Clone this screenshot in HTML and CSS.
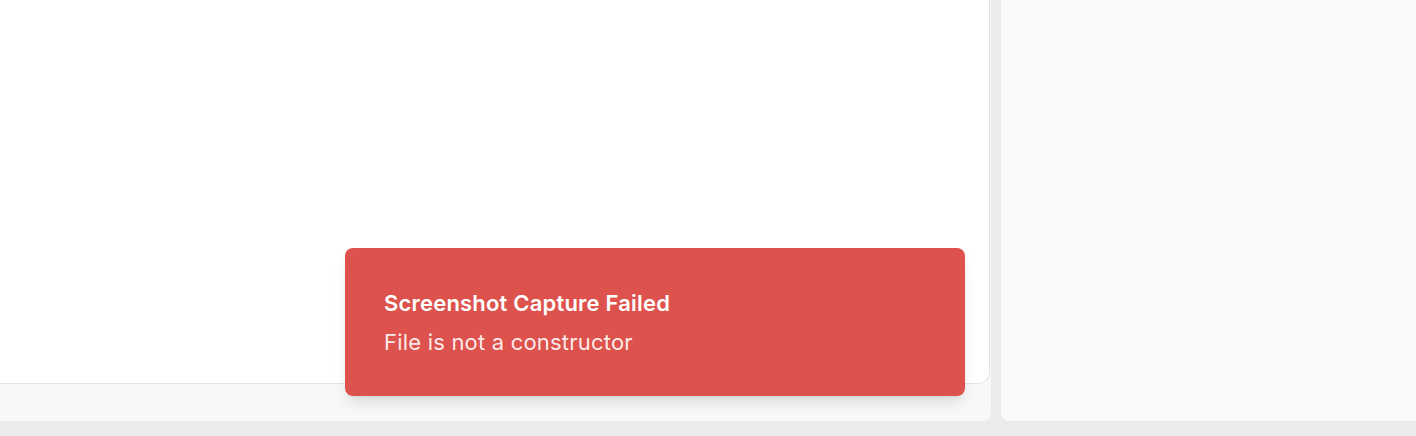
FILE: index.html
```html
<!DOCTYPE html>
<html>
<head>
<meta charset="utf-8">
<link rel="stylesheet" href="styles.css">
</head>
<body>
<div class="app">
  <div class="main">
    <div class="canvas"></div>
    <div class="footer"></div>
  </div>
  <div class="side"></div>
</div>
<div class="toast">
  <div class="toast-title">Screenshot Capture Failed</div>
  <div class="toast-desc">File is not a constructor</div>
</div>
</body>
</html>
```

FILE: styles.css
```css
html, body {
  margin: 0;
  padding: 0;
  width: 1416px;
  height: 436px;
  overflow: hidden;
  background: #ebebec;
  font-family: Inter, "Noto Sans", sans-serif;
}
.app {
  display: flex;
  gap: 10px;
  height: 421px;
}
.main {
  width: 991px;
  display: flex;
  flex-direction: column;
  background: #f8f8f8;
  border-bottom-right-radius: 8px;
}
.canvas {
  height: 384px;
  width: 990px;
  box-sizing: border-box;
  background: #ffffff;
  border-right: 1px solid #e4e4e7;
  border-bottom: 1px solid #e4e4e7;
  border-bottom-right-radius: 12px;
}
.footer {
  flex: 1;
}
.side {
  flex: 1;
  background: #fafafa;
  border-bottom-left-radius: 8px;
}
.toast {
  position: absolute;
  left: 345px;
  top: 248px;
  width: 620px;
  height: 148px;
  box-sizing: border-box;
  padding: 40px 39px 0;
  background: #dd524c;
  border-radius: 8px;
  box-shadow: 0 10px 15px -3px rgba(0,0,0,0.1), 0 4px 6px -4px rgba(0,0,0,0.1);
  color: #ffffff;
}
.toast-title {
  font-size: 22px;
  font-weight: 600;
  line-height: 30px;
  letter-spacing: 0.2px;
}
.toast-desc {
  margin-top: 9px;
  font-size: 22px;
  line-height: 30px;
  letter-spacing: 0.2px;
  color: rgba(255,255,255,0.9);
}
```
